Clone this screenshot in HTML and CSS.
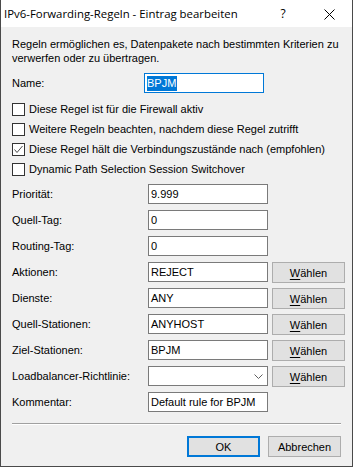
FILE: index.html
```html
<!DOCTYPE html>
<html lang="de">
<head>
  <meta charset="UTF-8" />
  <meta name="viewport" content="width=device-width, initial-scale=1.0"/>
  <title>IPv6-Forwarding-Regeln - Eintrag bearbeiten</title>
  <link rel="stylesheet" href="styles.css">
</head>
<body>

  <div class="dialog">

    <!-- Title bar -->
    <div class="titlebar">
      <div class="title">IPv6-Forwarding-Regeln - Eintrag bearbeiten</div>
      <div class="title-btn help">?</div>
      <div class="title-btn close">
        <svg width="11" height="11" viewBox="0 0 11 11">
          <path d="M0.5 0.5 L10.5 10.5 M10.5 0.5 L0.5 10.5" stroke="#000" stroke-width="1" fill="none"/>
        </svg>
      </div>
    </div>

    <div class="content">
      <p class="intro">Regeln ermöglichen es, Datenpakete nach bestimmten Kriterien zu<br>verwerfen oder zu übertragen.</p>

      <!-- Name -->
      <div class="row name-row">
        <div class="label">Name:</div>
        <div class="field focused"><span class="selected">BPJM</span></div>
      </div>

      <!-- Options -->
      <div class="checks">
        <div class="check"><span class="box"></span>Diese Regel ist für die Firewall aktiv</div>
        <div class="check"><span class="box"></span>Weitere Regeln beachten, nachdem diese Regel zutrifft</div>
        <div class="check">
          <span class="box">
            <svg width="11" height="11" viewBox="0 0 11 11">
              <path d="M1.5 5.5 L4 8.5 L9.5 2" stroke="#4d4d4d" stroke-width="1" fill="none"/>
            </svg>
          </span>Diese Regel hält die Verbindungszustände nach (empfohlen)
        </div>
        <div class="check"><span class="box"></span>Dynamic Path Selection Session Switchover</div>
      </div>

      <!-- Fields -->
      <div class="form-grid">
        <div class="label">Priorität:</div>
        <div class="field">9.999</div>
        <div></div>

        <div class="label">Quell-Tag:</div>
        <div class="field">0</div>
        <div></div>

        <div class="label">Routing-Tag:</div>
        <div class="field">0</div>
        <div></div>

        <div class="label">Aktionen:</div>
        <div class="field">REJECT</div>
        <div class="btn"><u>W</u>ählen</div>

        <div class="label">Dienste:</div>
        <div class="field">ANY</div>
        <div class="btn"><u>W</u>ählen</div>

        <div class="label">Quell-Stationen:</div>
        <div class="field">ANYHOST</div>
        <div class="btn"><u>W</u>ählen</div>

        <div class="label">Ziel-Stationen:</div>
        <div class="field">BPJM</div>
        <div class="btn"><u>W</u>ählen</div>

        <div class="label">Loadbalancer-Richtlinie:</div>
        <div class="field combo">
          <svg class="chevron" width="9" height="5" viewBox="0 0 9 5">
            <path d="M0.5 0.5 L4.5 4.5 L8.5 0.5" stroke="#606060" stroke-width="1" fill="none"/>
          </svg>
        </div>
        <div class="btn"><u>W</u>ählen</div>

        <div class="label">Kommentar:</div>
        <div class="field">Default rule for BPJM</div>
        <div></div>
      </div>

      <div class="separator"></div>

      <div class="actions">
        <div class="btn default">OK</div>
        <div class="btn">Abbrechen</div>
      </div>
    </div>

  </div>

</body>
</html>
```

FILE: styles.css
```css
* {
  margin: 0;
  padding: 0;
  box-sizing: border-box;
}

body {
  font-family: "Liberation Sans", Arial, sans-serif;
  font-size: 11px;
  color: #000;
  background-color: #f0f0f0;
}

.dialog {
  width: 353px;
  height: 467px;
  display: flex;
  flex-direction: column;
  background-color: #f0f0f0;
  border: 1px solid #4a4a4a;
  border-top: none;
}

/* Title bar */
.titlebar {
  height: 27px;
  background-color: #fff;
  display: flex;
  align-items: center;
}

.title {
  flex: 1;
  padding-left: 3px;
  font-family: "Open Sans", "Noto Sans", sans-serif;
  font-size: 11.4px;
  color: #000;
  white-space: nowrap;
}

.title-btn {
  width: 46px;
  height: 27px;
  display: flex;
  align-items: center;
  justify-content: center;
}

.help {
  font-family: "Open Sans", "Noto Sans", sans-serif;
  font-size: 12px;
}

.close svg {
  display: block;
  margin-top: 1px;
}

/* Content */
.content {
  flex: 1;
  padding: 10px 11px 0 11px;
  display: flex;
  flex-direction: column;
}

.intro {
  line-height: 14px;
}

.label {
  line-height: 20px;
  white-space: nowrap;
}

.row {
  display: flex;
  align-items: center;
}

.name-row {
  margin-top: 8px;
}

.name-row .label {
  width: 132px;
}

.field {
  width: 120px;
  height: 20px;
  background-color: #fff;
  border: 1px solid #7a7a7a;
  padding: 0 2px;
  line-height: 18px;
  white-space: nowrap;
  overflow: hidden;
}

.field.focused {
  border-color: #0078d7;
}

.selected {
  background-color: #0078d7;
  color: #fff;
  display: inline-block;
  line-height: 15px;
  padding-right: 1px;
  vertical-align: middle;
  margin-top: -2px;
}

/* Checkboxes */
.checks {
  margin-top: 6px;
  display: flex;
  flex-direction: column;
}

.check {
  height: 20px;
  display: flex;
  align-items: center;
  white-space: nowrap;
}

.box {
  width: 13px;
  height: 13px;
  border: 1px solid #333;
  background-color: #fff;
  margin-right: 4px;
  display: flex;
  align-items: center;
  justify-content: center;
}

/* Field grid */
.form-grid {
  margin-top: 5px;
  display: grid;
  grid-template-columns: 132px 120px 73px;
  grid-auto-rows: 20px;
  column-gap: 4px;
  row-gap: 6px;
  align-items: start;
}

.combo {
  display: flex;
  align-items: center;
  justify-content: flex-end;
  padding-right: 4px;
}

.chevron {
  display: block;
}

.btn {
  height: 21px;
  background-color: #e1e1e1;
  border: 1px solid #adadad;
  display: flex;
  align-items: center;
  justify-content: center;
  white-space: nowrap;
}

.btn u {
  text-underline-offset: 2px;
}

.separator {
  margin-top: 11px;
  width: 329px;
  border-top: 1px solid #a0a0a0;
  border-bottom: 1px solid #fff;
}

.actions {
  margin-top: 11px;
  width: 329px;
  display: flex;
  justify-content: flex-end;
  gap: 8px;
}

.actions .btn {
  width: 73px;
}

.btn.default {
  border: 2px solid #0078d7;
}
```
